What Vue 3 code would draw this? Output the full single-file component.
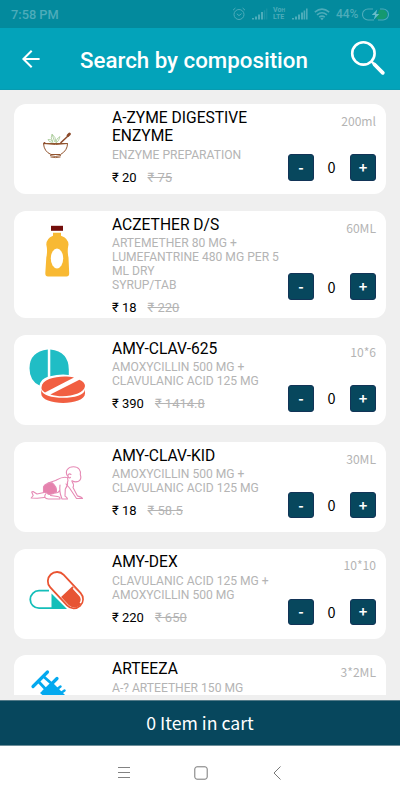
<script setup>
const products = [
  { name: 'A-ZYME DIGESTIVE\nENZYME', desc: 'ENZYME PREPARATION', price: '20', mrp: '75', pack: '200ml', icon: 'mortar' },
  { name: 'ACZETHER D/S', desc: 'ARTEMETHER 80 MG +\nLUMEFANTRINE 480 MG PER 5\nML DRY\nSYRUP/TAB', price: '18', mrp: '220', pack: '60ML', icon: 'bottle', tall: true },
  { name: 'AMY-CLAV-625', desc: 'AMOXYCILLIN 500 MG +\nCLAVULANIC ACID 125 MG', price: '390', mrp: '1414.8', pack: '10*6', icon: 'tablets' },
  { name: 'AMY-CLAV-KID', desc: 'AMOXYCILLIN 500 MG +\nCLAVULANIC ACID 125 MG', price: '18', mrp: '58.5', pack: '30ML', icon: 'baby' },
  { name: 'AMY-DEX', desc: 'CLAVULANIC ACID 125 MG +\nAMOXYCILLIN 500 MG', price: '220', mrp: '650', pack: '10*10', icon: 'capsules' },
  { name: 'ARTEEZA', desc: 'A-? ARTEETHER 150 MG', pack: '3*2ML', icon: 'syringe' },
]
</script>

<template>
  <div class="screen">
    <div class="status">
      <span class="time">7:58 PM</span>
      <svg class="alarm" width="14" height="14" viewBox="0 0 14 14" fill="none" stroke="currentColor">
        <circle cx="7" cy="7.5" r="5" />
        <path d="M1 3.2 3.4 1M13 3.2 10.6 1M4.8 6.8 7 8.6 9.6 6.6" />
      </svg>
      <svg class="signal" width="16" height="12" viewBox="0 0 16 12" fill="currentColor">
        <path d="M0 10h2v1.5H0zM3 8.5h2v3H3zM6 6.5h2v5H6zM9 4h2v7.5H9z" />
        <path opacity=".35" d="M11.8 2.2h1.5v9.3h-1.5zM14.3.6h1v10.9h-1z" />
      </svg>
      <span class="volte"><span>Vo<i>H</i></span><span>LTE</span></span>
      <svg class="signal2" width="16" height="12" viewBox="0 0 16 12" fill="currentColor">
        <path d="M0 10h2v1.5H0zM3 8.5h2v3H3zM6 6.5h2v5H6zM9 4.5h2v7H9zM11.6 2.5h1.6v9h-1.6zM14 .5h1.6v11H14z" />
      </svg>
      <svg class="wifi" width="16" height="13" viewBox="0 0 16 13" fill="none" stroke="currentColor" stroke-width="1.6">
        <path d="M.8 4.2Q8-1.8 15.2 4.2M3 6.8q5-4 10 0M5.2 9.2q2.8-2.2 5.6 0" />
        <path d="M6.3 10.4q1.7-1.2 3.4 0L8 12.3z" fill="currentColor" stroke="none" />
      </svg>
      <span class="pct">44%</span>
      <svg class="battery" width="27" height="13" viewBox="0 0 27 13">
        <path d="M17 1.8h3.500a4.700 4.700 0 0 1 0 9.400h-6.500z" fill="#15996f" />
        <path d="M11 1H6a5.400 5.400 0 0 0 0 11h6M18 1h3a5.400 5.400 0 0 1 0 11h-5" fill="none" stroke="currentColor" stroke-width="1.1" />
        <path d="M15.2 1.500 9.800 7h3.300l-1.400 4.800L17.300 6h-3.200z" fill="#69bdc8" />
      </svg>
    </div>

    <header class="bar">
      <svg class="back" width="20" height="20" viewBox="0 0 20 20" fill="none" stroke="#fff" stroke-width="2">
        <path d="M18.600 10H2.400M10.700 1.700 2.400 10l8.300 8.300" />
      </svg>
      <h1>Search by composition</h1>
      <svg class="find" width="36" height="36" viewBox="0 0 36 36" fill="none" stroke="#fff">
        <circle cx="13.400" cy="13.400" r="11.200" stroke-width="2.600" />
        <path d="m21.500 21.500 3 3" stroke-width="2.400" />
        <path d="m24.500 24.500 8.300 8.300" stroke-width="3.800" stroke-linecap="round" />
      </svg>
    </header>

    <main class="list">
      <article v-for="p in products" :key="p.name" class="card" :class="{ tall: p.tall }">
        <div class="pic">
          <svg v-if="p.icon === 'mortar'" width="84" height="90" viewBox="0 0 84 90" fill="none">
            <path d="M29.500 39.500h24q0 7-7 11H37q-7-3-7.500-11z" stroke="#92552f" fill="#fff" />
            <path d="M29.500 39.500q12 2 24 0" stroke="#92552f" />
            <path d="M36 51.500q5.500 2 11 0M36.500 53q5 1.200 10 0" stroke="#92552f" stroke-width=".9" />
            <path d="m46.500 39 8-7.500" stroke="#8c4a2b" stroke-width="1.500" />
            <path d="m54 31.500 1.500-1.500" stroke="#8c4a2b" stroke-width="2.800" stroke-linecap="round" />
            <path d="M30.500 39.300v-.3" stroke="#8c4a2b" stroke-width="2" stroke-linecap="round" />
            <path d="M39 38.500q-3-5-1-8.500q4 3 4 8.500q0-4 4-6-1 5-4 6.500M38.500 38.500q-4-.5-4.500-3 3-.5 5 2M38.300 31l2.500 7" stroke="#a3c692" stroke-width=".8" />
          </svg>

          <svg v-else-if="p.icon === 'bottle'" width="84" height="90" viewBox="0 0 84 90">
            <path d="M37 14.800h12v5H37z" fill="#730e0b" />
            <path d="M39 21.500h8v2.700q7.500 2.500 7.500 8.300-1.500 6 0 12l.7 14.500q0 3-2.700 3H34q-2.700 0-2.700-3l1-14.500q1.500-6 0-12 0-5.800 6.700-8.300z" transform="translate(0 -1.500) scale(1 1.080)" fill="#f8b933" />
            <ellipse cx="43" cy="47.500" rx="6.200" ry="10" fill="#fff" />
          </svg>

          <svg v-else-if="p.icon === 'tablets'" width="84" height="90" viewBox="0 0 84 90">
            <path d="M33.800 14.400v27.400q-7 2.200-8.300 8.800-10-5-10-17.400 0-16.600 18.300-18.800zM36.300 14.400q18.500 2.200 18.500 20.200v5.300q-9.500-1-18.500 1.300z" fill="#20bdc5" />
            <path d="M27.200 54.200v4.400c0 12.500 43.800 12.500 43.800 0v-4.400c0 11.500-43.800 11.500-43.800 0z" fill="#f15f42" />
            <path d="M60 42.600 31 57.400q-4-2.200-3.500-5.200c1-9.500 20.500-12.300 32.500-9.600zM65.400 44.700q5.600 2.600 5.600 6.300c-.5 8.300-20.500 13-34.700 8.500z" fill="#f15f42" />
          </svg>

          <svg v-else-if="p.icon === 'baby'" width="84" height="90" viewBox="0 0 84 90" fill="none" stroke="#e68ab5" stroke-width="1.100" stroke-linejoin="round" stroke-linecap="round">
            <path d="M53.500 34C50.500 29 54 24.800 59.500 24.800c5.500 0 7.500 4 6.800 7.700 1 3 .5 5.500-1.800 6.800-2 .8-4.500.6-6.500-.6" />
            <path d="M57 32.500c-2-1.500-3.800.5-2.800 2.300.5 1.200 1.700 1.500 2.300.5M53.500 35.500l.5 3.500" />
            <path d="M52.500 35.500C48 34.500 44.500 37 41.500 38.500L34 41" />
            <path d="M58 39.500c1.500 2 2 4 1 6l4.500 8.500c2 .5 4.500 1 5 2.500h-6l-7-10.500-3.500-4" />
            <path d="M46 43c-.5 4 0 9 1.500 12.500l.5 1.500h5.500c-.2-1.500-1.500-2.200-2.500-3l.3-7c2-2.500 2.500-5 2.200-7.500M41.500 51c2 0 3.500-1 4.500-3" />
            <path d="M29.500 45c1-2.500 4.500-4.200 8.500-4.200q5 4 4.500 9-3.500 3-8 2.500-2-1.800-5-2.300z" fill="#e582ad" />
            <path d="M30 50.500l-7 1.500-4-2.500-1.300.5 1.500 3.500-2 2.500 6 .3 7-.8M31.500 52q-2.500 4.500 3 5h11.500q.5-2-2.500-2.500l-7-1" />
          </svg>

          <svg v-else-if="p.icon === 'capsules'" width="84" height="90" viewBox="0 0 84 90" fill="none">
            <path d="M35 41.700H25a8.700 8.700 0 0 0 0 17.500H50" stroke="#14beb9" stroke-width="1.800" />
            <path d="M37.500 44.500 53 60H37.500z" fill="#14beb9" />
            <g transform="translate(51.400 41.200) rotate(47)">
              <path d="M2-7.800h11a7.800 7.800 0 0 1 0 15.600H2z" fill="#e75433" />
              <rect x="-21.500" y="-9.200" width="43" height="18.400" rx="9.200" stroke="#ea5432" stroke-width="1.800" />
              <path d="M4-7h10q5 1 5.500 5" stroke="#fff" stroke-width="1.500" />
            </g>
          </svg>

          <svg v-else width="84" height="90" viewBox="0 0 84 90" fill="none" stroke="#04a9ef">
            <path d="m19 31.500 14.500-14.500M43 23.500 29.500 37" stroke-width="3.200" stroke-linecap="round" />
            <path d="m24.500 26.500 7 7.500M29.500 21.500l8 7" stroke-width="2.800" />
            <path d="m26 38 12-11 17 17-10 10z" fill="#04a9ef" stroke="none" />
            <path d="m42 35 4.500-3.500M45.500 39l5-3.500" stroke-width="2.400" stroke-linecap="round" />
          </svg>
        </div>

        <div class="info">
          <h2>{{ p.name }}</h2>
          <p>{{ p.desc }}</p>
          <div v-if="p.price" class="prices"><span>₹ {{ p.price }}</span><del>₹ {{ p.mrp }}</del></div>
        </div>

        <div class="side">
          <span class="pack">{{ p.pack }}</span>
          <div v-if="p.price" class="qty"><button>-</button><span>0</span><button>+</button></div>
        </div>
      </article>
    </main>

    <div class="cart">0 Item in cart</div>

    <nav class="nav">
      <svg width="14" height="14" viewBox="0 0 14 14" stroke="#828282"><path d="M1 1.500h12M1 6.500h12M1 11.500h12" /></svg>
      <svg width="14" height="14" viewBox="0 0 14 14" fill="none" stroke="#777"><rect x=".8" y=".8" width="12.400" height="12.400" rx="2.200" /></svg>
      <svg width="14" height="14" viewBox="0 0 14 14" fill="none" stroke="#777"><path d="M10.500.5 4 7l6.500 6.500" /></svg>
    </nav>
  </div>
</template>

<style>
body { background: #fff; }
</style>

<style scoped>
* { box-sizing: border-box; margin: 0; }
svg { display: block; flex: none; }
.screen { width: 400px; height: 800px; display: flex; flex-direction: column; overflow: hidden; background: #efefef; font-family: Roboto, sans-serif; }
.status { height: 28px; flex: none; background: #038a9d; color: #4dacba; display: flex; align-items: center; padding: 0 11px; font-size: 12px; font-weight: 500; }
.time { font-size: 12.800px; margin-right: auto; }
.alarm { margin-right: 6px; }
.signal { margin-right: 5px; }
.volte { display: flex; flex-direction: column; font-size: 7px; line-height: 7px; font-weight: 700; width: 13px; margin-right: 6px; }
.volte i { font-style: normal; font-size: 5px; }
.signal2 { margin-right: 6px; }
.wifi { margin-right: 6px; }
.pct { width: 24px; margin-right: 2px; letter-spacing: -.1px; }
.bar { height: 62px; flex: none; background: #03a3ba; display: flex; align-items: center; border-bottom: 1px solid #079bb0; color: #fff; }
.back { margin-left: 21px; }
h1 { flex: 1; margin: 2px 0 0 39px; font-size: 22.300px; font-weight: 500; white-space: nowrap; line-height: 28px; }
.find { margin: -1px 14px 0 0; }
.list { height: 605px; flex: none; padding: 14px 14px 0; display: flex; flex-direction: column; gap: 16.750px; overflow: hidden; }
.card { flex: none; min-height: 90px; background: #fff; border-radius: 12px; display: flex; }
.tall { height: 107.500px; }
.pic { width: 84px; flex: none; }
.info { margin-left: 14px; padding-top: 4.800px; white-space: pre; width: 172px; }
h2 { font-size: 15.600px; line-height: 18.500px; font-weight: 400; color: #000; }
.info p { font-size: 12.100px; line-height: 14px; color: #b4b4b4; margin-top: 2px; }
.prices { display: flex; gap: 11px; font-size: 13px; line-height: 16px; margin-top: 8px; color: #000; }
.prices del { color: #b4b4b4; }
.side { flex: 1; padding: 6.900px 10px 13.500px 0; display: flex; flex-direction: column; align-items: flex-end; justify-content: space-between; font-family: "Noto Sans CJK SC", sans-serif; }
.tall .side { padding-bottom: 18.500px; }
.pack { font-size: 12.100px; line-height: 19px; color: #b4b4b4; }
.qty { display: flex; justify-content: space-between; align-items: center; width: 88px; font-size: 14.500px; color: #000; }
.qty button { width: 26px; height: 26.500px; padding: 0 0 1px; background: #07475d; border: 1px solid #123457; border-radius: 3px; color: #fff; font-family: "Noto Sans CJK SC", sans-serif; font-size: 14.500px; line-height: 20px; font-weight: 700; }
.qty span { line-height: 26px; margin-right: 1px; }
.cart { height: 46px; margin-top: 5px; flex: none; background: #07475d; border-top: 1px solid #537a88; border-bottom: 1px solid #6d8e99; color: #fff; font-family: "Noto Sans CJK SC", sans-serif; font-size: 17.700px; line-height: 43px; text-align: center; }
.nav { flex: 1; background: #fff; display: flex; justify-content: center; align-items: center; gap: 62.500px; padding-left: 1px; }
</style>
